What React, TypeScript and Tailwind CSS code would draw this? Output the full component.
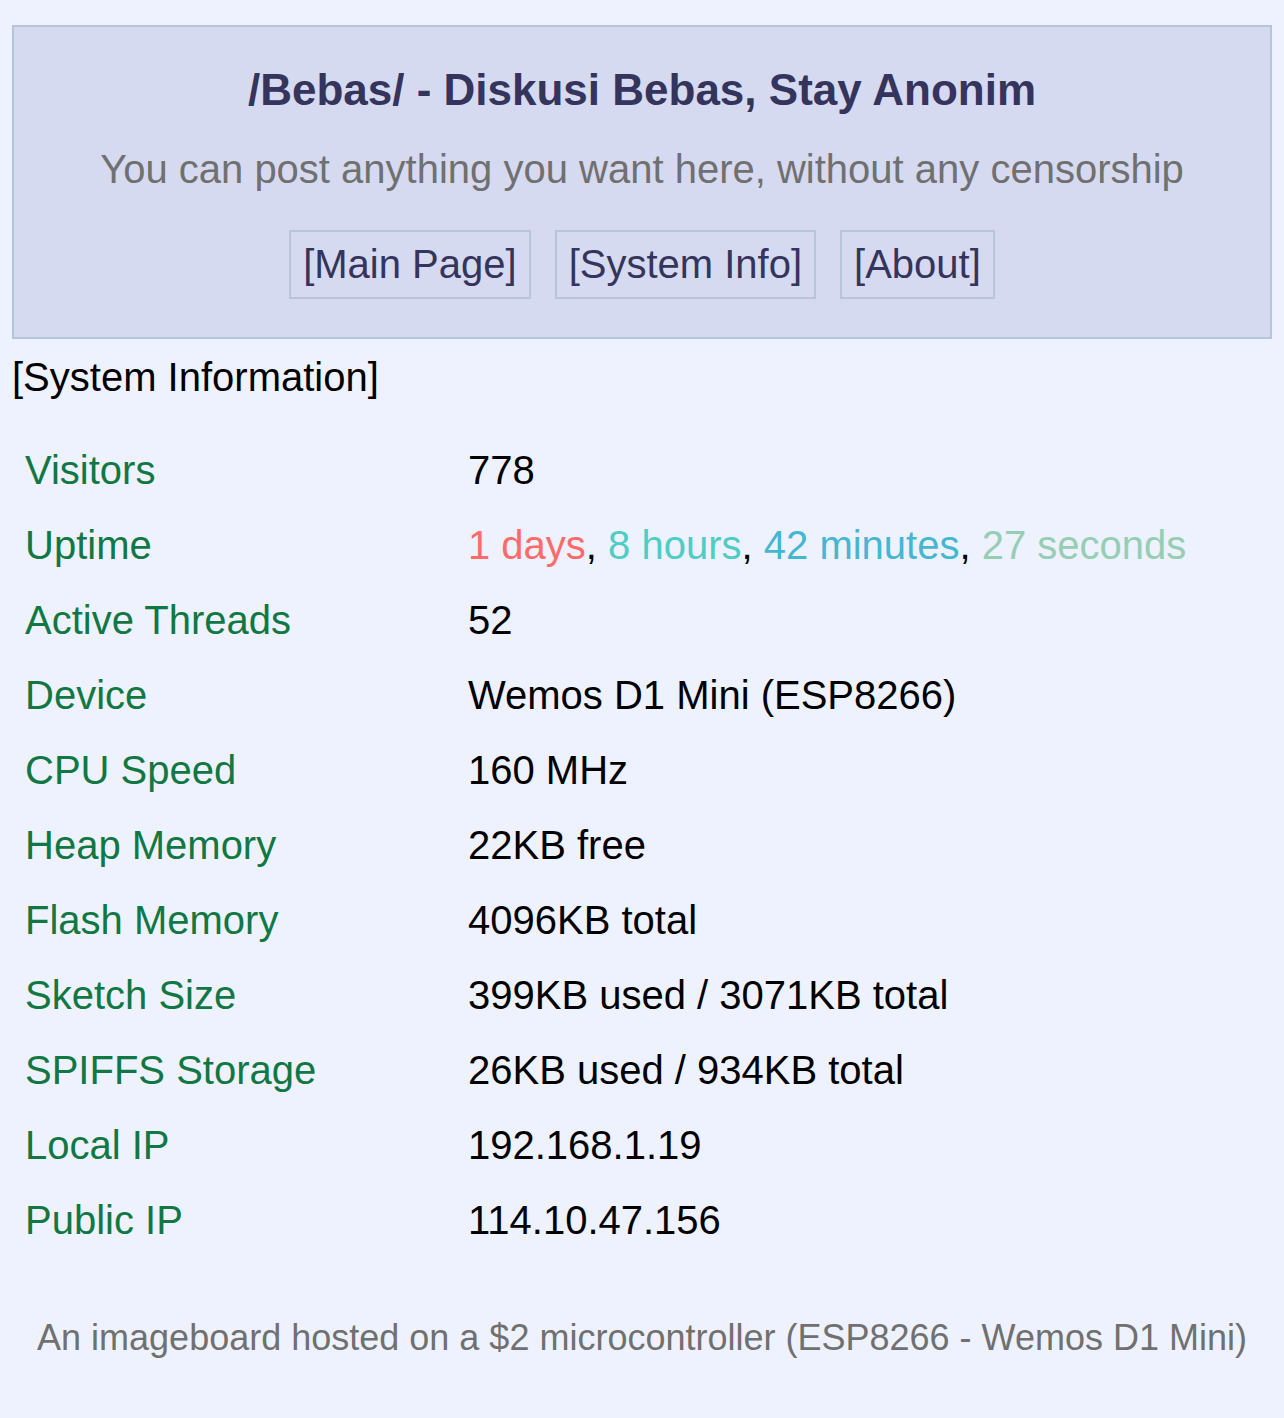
import React from "react";

const rows: [string, React.ReactNode][] = [
  ["Visitors", "778"],
  [
    "Uptime",
    <>
      <span className="text-[#ff6b6b]">1 days</span>,{" "}
      <span className="text-[#4ecdc4]">8 hours</span>,{" "}
      <span className="text-[#45b7d1]">42 minutes</span>,{" "}
      <span className="text-[#96ceb4]">27 seconds</span>
    </>,
  ],
  ["Active Threads", "52"],
  ["Device", "Wemos D1 Mini (ESP8266)"],
  ["CPU Speed", "160 MHz"],
  ["Heap Memory", "22KB free"],
  ["Flash Memory", "4096KB total"],
  ["Sketch Size", "399KB used / 3071KB total"],
  ["SPIFFS Storage", "26KB used / 934KB total"],
  ["Local IP", "192.168.1.19"],
  ["Public IP", "114.10.47.156"],
];

const App = () => {
  return (
    <div className="min-h-[1418px] bg-[#eef2ff] px-[12px] pt-[25px] font-['Liberation_Sans',Arial,sans-serif] text-black">
      <div className="flex h-[314px] flex-col items-center border-2 border-[#b7c5d9] bg-[#d6daf0] pt-[37px]">
        <h1 className="text-[44px] font-bold leading-[51px] text-[#34345c]">
          /Bebas/ - Diskusi Bebas, Stay Anonim
        </h1>
        <p className="mt-[31px] text-[40px] leading-[46px] text-[#707070]">
          You can post anything you want here, without any censorship
        </p>
        <div className="mt-[38px] flex gap-[24px]">
          {["[Main Page]", "[System Info]", "[About]"].map((t) => (
            <a
              key={t}
              className="border-2 border-[#b7c5d9] px-[12px] pt-[9px] pb-[10px] text-[40px] leading-[46px] text-[#34345c]"
            >
              {t}
            </a>
          ))}
        </div>
      </div>

      <div className="mt-[15px] text-[40px] leading-[46px]">[System Information]</div>

      <div className="mt-[32px]">
        {rows.map(([label, value]) => (
          <div key={label} className="flex h-[75px] items-center text-[40px] leading-[46px]">
            <div className="w-[456px] pl-[13px] text-[#117743]">{label}</div>
            <div>{value}</div>
          </div>
        ))}
      </div>

      <p className="mt-[60px] text-center text-[36px] leading-[41px] text-[#707070]">
        An imageboard hosted on a $2 microcontroller (ESP8266 - Wemos D1 Mini)
      </p>
    </div>
  );
};

export default App;
